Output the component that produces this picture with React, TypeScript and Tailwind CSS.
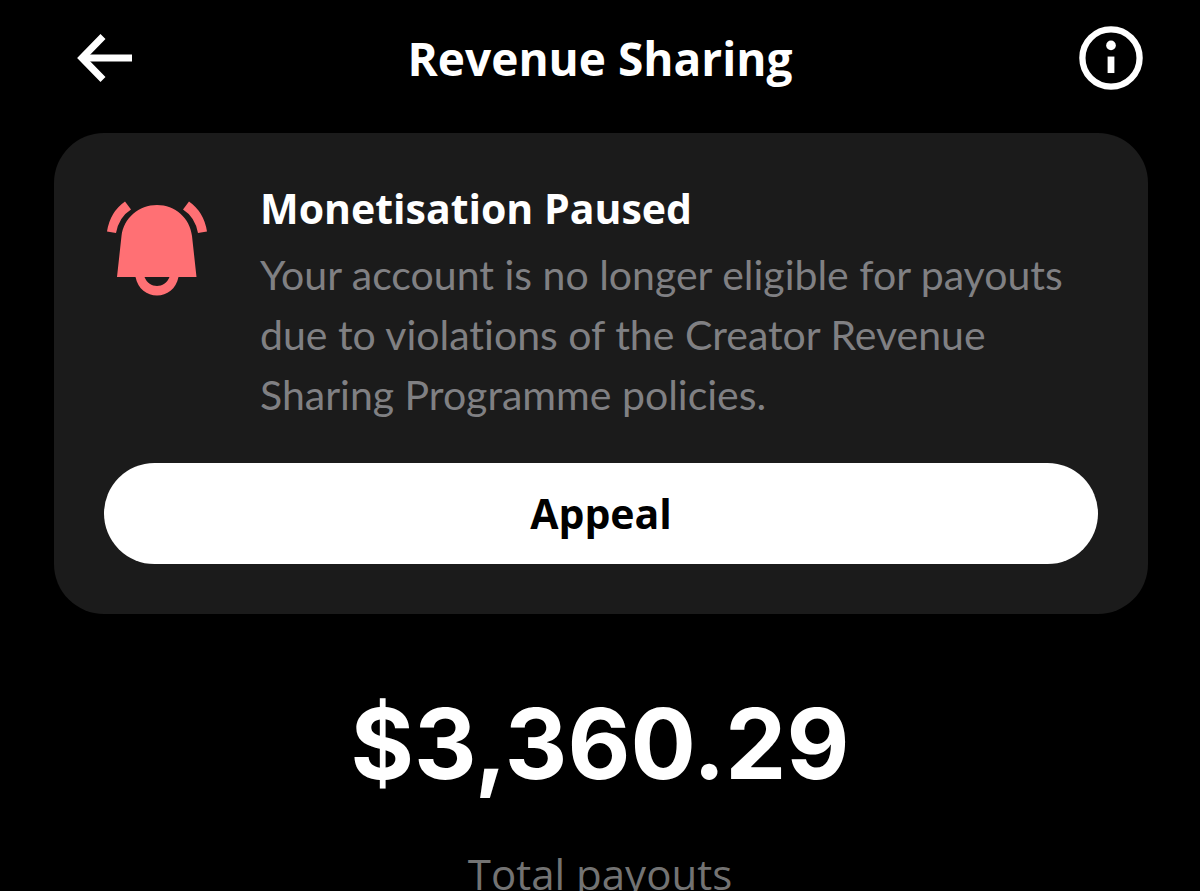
function BackArrow() {
  return (
    <svg viewBox="0 0 56 48" className="h-12 w-14" fill="none" stroke="currentColor" strokeWidth="7" aria-hidden="true">
      <path d="M26 2.500 L5 24 L26 45.500" />
      <path d="M7 24 H55" />
    </svg>
  );
}

function InfoIcon() {
  return (
    <svg viewBox="0 0 66 66" className="size-16" aria-hidden="true">
      <circle cx="33" cy="33" r="29.500" fill="none" stroke="currentColor" strokeWidth="6.500" />
      <circle cx="33" cy="20" r="5" fill="currentColor" />
      <rect x="29.500" y="31.500" width="7" height="17" fill="currentColor" />
    </svg>
  );
}

function BellIcon() {
  return (
    <svg viewBox="0 0 100 96" className="h-24 w-[100px] shrink-0" fill="#ff7074" aria-hidden="true">
      <path d="M50 4 C68 4 83 17 85 35 L89.500 76 H71.500 C69 88 60 94.500 50 94.500 C40 94.500 31 88 28.500 76 H10 L14.500 35 C16.500 17 32 4 50 4 Z M37.500 76 C42 88 58 88 62.500 76 Z" fillRule="evenodd" />
      <path d="M18 0.500 L24 8.500 Q12 16 9 32 L0 30.500 Q3 11 18 0.500 Z" />
      <path d="M82 0.500 L76 8.500 Q88 16 91 32 L100 30.500 Q97 11 82 0.500 Z" />
    </svg>
  );
}

export default function App() {
  return (
    <div className="min-h-[891px] bg-black font-['Open_Sans',sans-serif] text-white">
      <header className="flex h-[133px] items-start justify-between pt-6 pr-[57px] pl-[77px]">
        <button type="button" aria-label="Back" className="mt-[10px] mr-2">
          <BackArrow />
        </button>
        <h1 className="pr-5 text-[46px] leading-[68px] font-bold">Revenue Sharing</h1>
        <button type="button" aria-label="Information" className="mt-0.5">
          <InfoIcon />
        </button>
      </header>

      <main>
        <section className="mr-[52px] ml-[54px] rounded-[50px] bg-[#1b1b1b] p-[50px]">
          <div className="flex gap-[53px] pl-[3px]">
            <div className="pt-[18px]">
              <BellIcon />
            </div>
            <div>
              <h2 className="text-[41px] leading-[50px] font-bold">Monetisation Paused</h2>
              <p className="mt-3 font-[Lato,sans-serif] text-[41px] leading-[60px] text-[#808083] [font-variant-ligatures:none]">
                Your account is no longer eligible for payouts due to violations of the Creator Revenue Sharing
                Programme policies.
              </p>
            </div>
          </div>
          <button
            type="button"
            className="mt-[38px] h-[101px] w-full rounded-full bg-white text-[41px] font-bold text-black"
          >
            Appeal
          </button>
        </section>

        <section className="flex flex-col items-center pt-[74px]">
          <p className="font-['Inter',sans-serif] text-[97px] leading-[112px] font-bold">$3,360.29</p>
          <p className="mt-[46px] text-[42px] leading-[56px] text-[#737373]">Total payouts</p>
        </section>
      </main>
    </div>
  );
}
